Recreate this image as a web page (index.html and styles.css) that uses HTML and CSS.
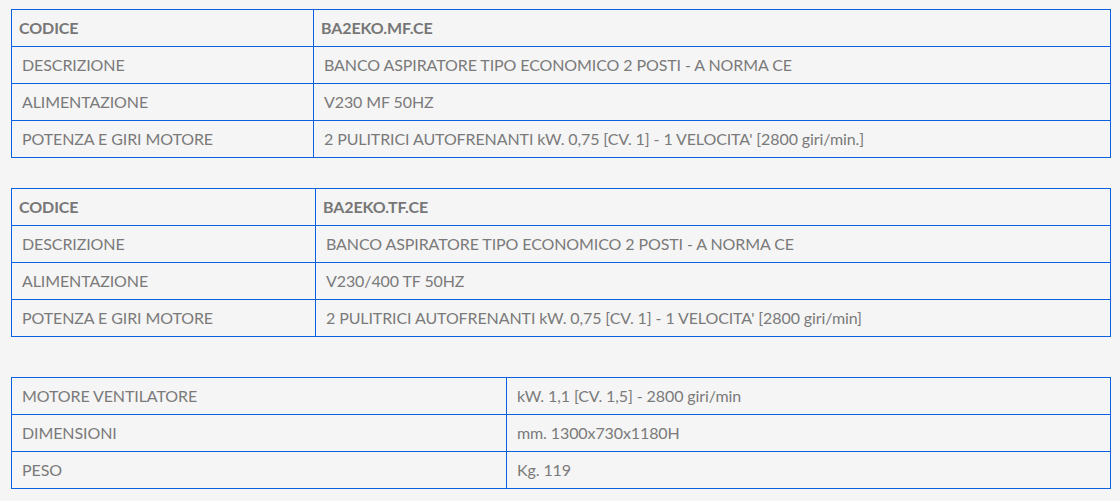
FILE: index.html
```html
<!DOCTYPE html>
<html lang="it">
<head>
<meta charset="utf-8">
<title>Scheda tecnica</title>
<link rel="stylesheet" href="styles.css">
</head>
<body>
<div class="page">
  <table class="spec spec-a">
    <thead>
      <tr><th class="c1">CODICE</th><th>BA2EKO.MF.CE</th></tr>
    </thead>
    <tbody>
      <tr><td>DESCRIZIONE</td><td>BANCO ASPIRATORE TIPO ECONOMICO 2 POSTI - A NORMA CE</td></tr>
      <tr><td>ALIMENTAZIONE</td><td>V230 MF 50HZ</td></tr>
      <tr><td>POTENZA E GIRI MOTORE</td><td>2 PULITRICI AUTOFRENANTI kW. 0,75 [CV. 1] - 1 VELOCITA' [2800 giri/min.]</td></tr>
    </tbody>
  </table>

  <table class="spec spec-b">
    <thead>
      <tr><th class="c1">CODICE</th><th>BA2EKO.TF.CE</th></tr>
    </thead>
    <tbody>
      <tr><td>DESCRIZIONE</td><td>BANCO ASPIRATORE TIPO ECONOMICO 2 POSTI - A NORMA CE</td></tr>
      <tr><td>ALIMENTAZIONE</td><td>V230/400 TF 50HZ</td></tr>
      <tr><td>POTENZA E GIRI MOTORE</td><td>2 PULITRICI AUTOFRENANTI kW. 0,75 [CV. 1] - 1 VELOCITA' [2800 giri/min]</td></tr>
    </tbody>
  </table>

  <table class="spec spec-c">
    <tbody>
      <tr><td class="c1">MOTORE VENTILATORE</td><td>kW. 1,1 [CV. 1,5] - 2800 giri/min</td></tr>
      <tr><td>DIMENSIONI</td><td>mm. 1300x730x1180H</td></tr>
      <tr><td>PESO</td><td>Kg. 119</td></tr>
    </tbody>
  </table>
</div>
</body>
</html>
```

FILE: styles.css
```css
html, body {
  margin: 0;
  padding: 0;
  background: #f5f5f5;
}

body {
  font-family: Lato, "Open Sans", "Liberation Sans", sans-serif;
  font-size: 16px;
  letter-spacing: -0.1px;
  color: #7a7a7a;
}

.page {
  padding: 9px 10px 0 11px;
}

.spec {
  width: 1100px;
  border-collapse: collapse;
  table-layout: fixed;
}

.spec th,
.spec td {
  border: 1px solid #0a62e0;
  height: 37px;
  padding: 0 10px;
  line-height: 20px;
  text-align: left;
  vertical-align: middle;
  box-sizing: border-box;
}

.spec th {
  font-weight: 700;
  color: #777;
  padding-left: 7px;
}

.spec-a .c1 { width: 302px; }
.spec-b .c1 { width: 304px; }
.spec-c .c1 { width: 495px; }

.spec-a { margin-bottom: 30px; }
.spec-b { margin-bottom: 40px; }
```
